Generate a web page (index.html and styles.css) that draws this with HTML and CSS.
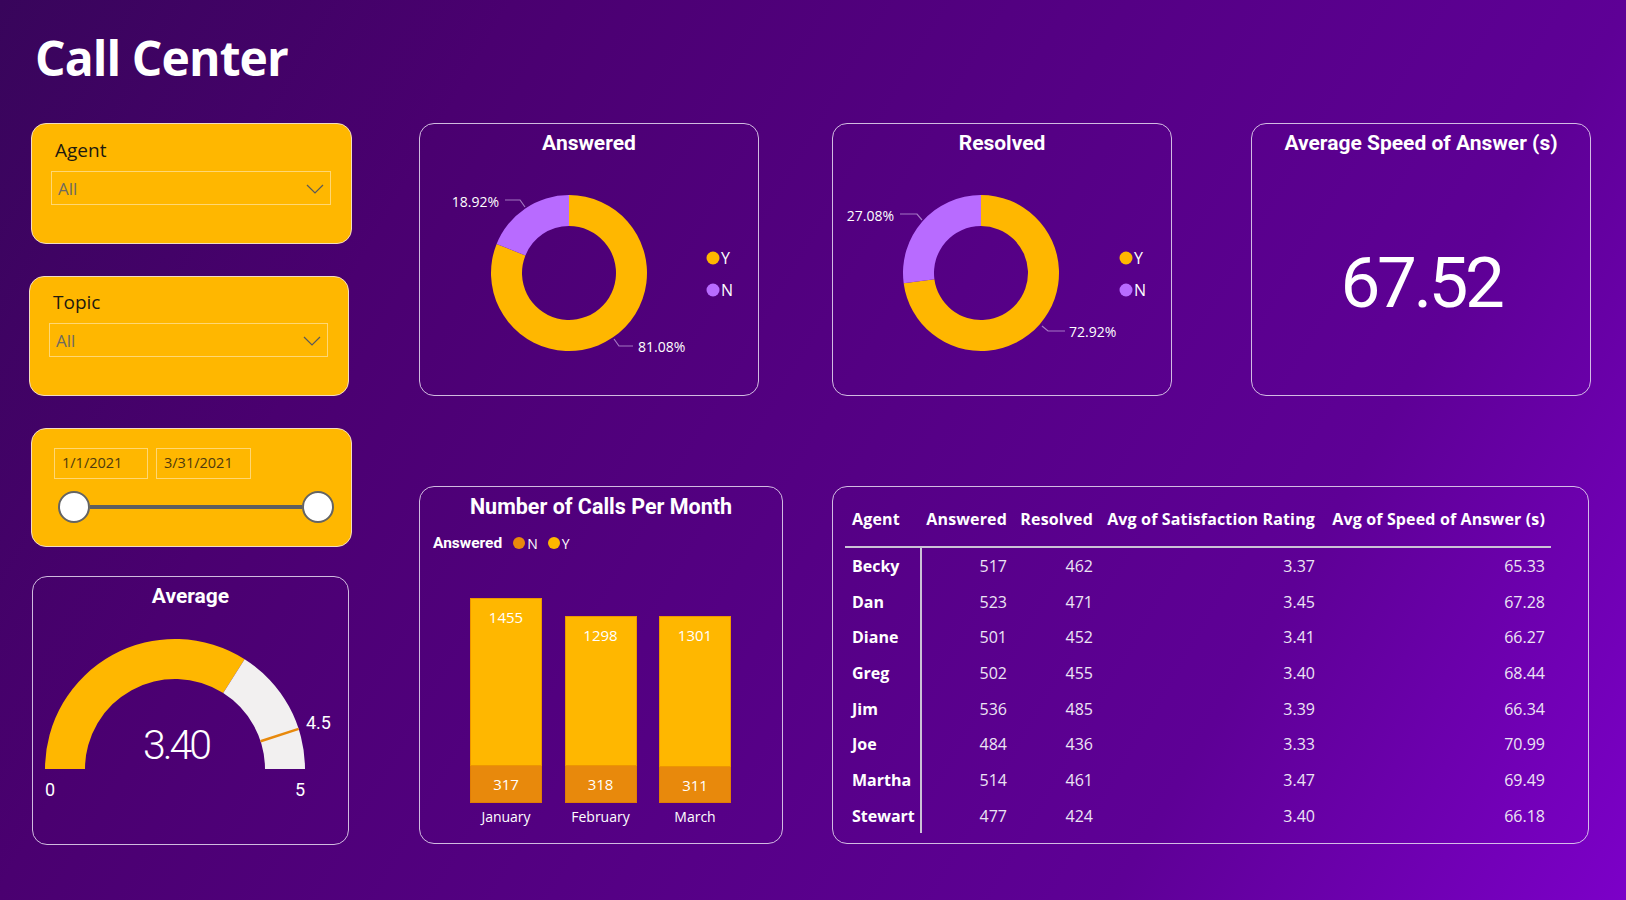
FILE: index.html
```html
<!DOCTYPE html>
<html lang="en">
<head>
    <meta charset="UTF-8">
    <meta name="viewport" content="width=device-width, initial-scale=1.0">
    <title>Call Center</title>
    <link rel="stylesheet" href="styles.css">
</head>
<body>
    <h1 class="page-title">Call Center</h1>

    <div class="board">
        <!-- Filters column -->
        <aside class="filters">
            <div class="slicer slicer-agent">
                <div class="slicer-label">Agent</div>
                <div class="dropdown">
                    <span>All</span>
                    <svg class="chevron" width="18" height="10" viewBox="0 0 18 10"><path d="M1 1 L9 9 L17 1" fill="none" stroke="#5a5a5a" stroke-width="1.2"/></svg>
                </div>
            </div>

            <div class="slicer slicer-topic">
                <div class="slicer-label">Topic</div>
                <div class="dropdown">
                    <span>All</span>
                    <svg class="chevron" width="18" height="10" viewBox="0 0 18 10"><path d="M1 1 L9 9 L17 1" fill="none" stroke="#5a5a5a" stroke-width="1.2"/></svg>
                </div>
            </div>

            <div class="slicer slicer-date">
                <div class="date-inputs">
                    <div class="date-box">1/1/2021</div>
                    <div class="date-box">3/31/2021</div>
                </div>
                <div class="range">
                    <span class="thumb"></span>
                    <span class="track"></span>
                    <span class="thumb"></span>
                </div>
            </div>

            <div class="card gauge-card">
                <div class="card-title">Average</div>
                <svg class="gauge" width="315" height="225" viewBox="0 0 315 225">
                    <path d="M12,150 A130,130 0 0 1 211.65,40.24 L190.22,74.01 A90,90 0 0 0 52,150 Z" fill="#ffb700"/>
                    <path d="M211.65,40.24 A130,130 0 0 1 272,150 L232,150 A90,90 0 0 0 190.22,74.01 Z" fill="#f2f0f0"/>
                    <line x1="227.6" y1="122.19" x2="265.64" y2="109.83" stroke="#e8890c" stroke-width="2.5"/>
                    <text class="gauge-value" x="143" y="140" text-anchor="middle">3.40</text>
                    <text class="gauge-tick" x="273" y="110">4.5</text>
                    <text class="gauge-tick" x="12" y="177">0</text>
                    <text class="gauge-tick" x="262" y="177">5</text>
                </svg>
            </div>
        </aside>

        <!-- Visuals -->
        <main class="visuals">
            <div class="row row-top">
                <div class="card donut-card">
                    <div class="card-title">Answered</div>
                    <svg width="338" height="229" viewBox="0 0 338 229">
                        <path d="M149,29 A78,78 0 1 1 76.62,77.92 L105.39,89.48 A47,47 0 1 0 149,60 Z" fill="#ffb700"/>
                        <path d="M76.62,77.92 A78,78 0 0 1 149,29 L149,60 A47,47 0 0 0 105.39,89.48 Z" fill="#b86bff"/>
                        <polyline class="leader" points="85,34 100,34 105,41"/>
                        <polyline class="leader" points="194,173 199,180 213,180"/>
                        <text class="data-label" x="79" y="41" text-anchor="end">18.92%</text>
                        <text class="data-label" x="218" y="186">81.08%</text>
                        <circle cx="293" cy="92" r="6.5" fill="#ffb700"/>
                        <text class="legend-label" x="301" y="98">Y</text>
                        <circle cx="293" cy="124" r="6.5" fill="#b86bff"/>
                        <text class="legend-label" x="301" y="130">N</text>
                    </svg>
                </div>

                <div class="card donut-card">
                    <div class="card-title">Resolved</div>
                    <svg width="338" height="229" viewBox="0 0 338 229">
                        <path d="M148,29 A78,78 0 1 1 70.67,117.17 L101.40,113.13 A47,47 0 1 0 148,60 Z" fill="#ffb700"/>
                        <path d="M70.67,117.17 A78,78 0 0 1 148,29 L148,60 A47,47 0 0 0 101.40,113.13 Z" fill="#b86bff"/>
                        <polyline class="leader" points="67,48 84,48 89,54"/>
                        <polyline class="leader" points="209,160 215,165 232,165"/>
                        <text class="data-label" x="61" y="55" text-anchor="end">27.08%</text>
                        <text class="data-label" x="236" y="171">72.92%</text>
                        <circle cx="293" cy="92" r="6.5" fill="#ffb700"/>
                        <text class="legend-label" x="301" y="98">Y</text>
                        <circle cx="293" cy="124" r="6.5" fill="#b86bff"/>
                        <text class="legend-label" x="301" y="130">N</text>
                    </svg>
                </div>

                <div class="card kpi-card">
                    <div class="card-title">Average Speed of Answer (s)</div>
                    <div class="kpi-value">67.52</div>
                </div>
            </div>

            <div class="row row-bottom">
                <div class="card calls-card">
                    <div class="card-title calls-title">Number of Calls Per Month</div>
                    <div class="calls-legend">
                        <b>Answered</b>
                        <span class="dot dot-n"></span><span>N</span>
                        <span class="dot dot-y"></span><span>Y</span>
                    </div>
                    <div class="bars">
                        <div class="bar">
                            <div class="seg seg-y" style="height: 168px">1455</div>
                            <div class="seg seg-n" style="height: 37px">317</div>
                        </div>
                        <div class="bar">
                            <div class="seg seg-y" style="height: 150px">1298</div>
                            <div class="seg seg-n" style="height: 37px">318</div>
                        </div>
                        <div class="bar">
                            <div class="seg seg-y" style="height: 151px">1301</div>
                            <div class="seg seg-n" style="height: 36px">311</div>
                        </div>
                    </div>
                    <div class="months">
                        <span>January</span>
                        <span>February</span>
                        <span>March</span>
                    </div>
                </div>

                <div class="card table-card">
                    <table class="agents">
                        <colgroup>
                            <col style="width: 76px">
                            <col style="width: 92px">
                            <col style="width: 86px">
                            <col style="width: 222px">
                            <col style="width: 230px">
                        </colgroup>
                        <thead>
                            <tr>
                                <th class="name">Agent</th>
                                <th>Answered</th>
                                <th>Resolved</th>
                                <th>Avg of Satisfaction Rating</th>
                                <th>Avg of Speed of Answer (s)</th>
                            </tr>
                        </thead>
                        <tbody>
                            <tr><td class="name">Becky</td><td>517</td><td>462</td><td>3.37</td><td>65.33</td></tr>
                            <tr><td class="name">Dan</td><td>523</td><td>471</td><td>3.45</td><td>67.28</td></tr>
                            <tr><td class="name">Diane</td><td>501</td><td>452</td><td>3.41</td><td>66.27</td></tr>
                            <tr><td class="name">Greg</td><td>502</td><td>455</td><td>3.40</td><td>68.44</td></tr>
                            <tr><td class="name">Jim</td><td>536</td><td>485</td><td>3.39</td><td>66.34</td></tr>
                            <tr><td class="name">Joe</td><td>484</td><td>436</td><td>3.33</td><td>70.99</td></tr>
                            <tr><td class="name">Martha</td><td>514</td><td>461</td><td>3.47</td><td>69.49</td></tr>
                            <tr><td class="name">Stewart</td><td>477</td><td>424</td><td>3.40</td><td>66.18</td></tr>
                        </tbody>
                    </table>
                </div>
            </div>
        </main>
    </div>
</body>
</html>
```

FILE: styles.css
```css
* {
    box-sizing: border-box;
}
body {
    margin: 0;
    width: 1626px;
    height: 900px;
    overflow: hidden;
    font-family: "Open Sans", sans-serif;
    color: #fff;
    background: linear-gradient(120deg, #38055b 0%, #4a0070 24%, #5e0096 76%, #7c00c8 100%);
}
.page-title {
    margin: 0;
    height: 123px;
    padding: 34px 0 0 35px;
    font-size: 48px;
    line-height: 48px;
    font-weight: 700;
    letter-spacing: -0.9px;
}
.board {
    display: grid;
    grid-template-columns: 321px 1172px;
    column-gap: 67px;
    padding-left: 31px;
}

/* Filters */
.filters {
    display: flex;
    flex-direction: column;
}
.slicer {
    background-color: #ffb700;
    border: 1px solid #f3dcc0;
    border-radius: 15px;
    width: 321px;
}
.slicer-agent {
    height: 121px;
    padding: 14px 20px 0 19px;
    margin-bottom: 32px;
}
.slicer-topic {
    height: 120px;
    width: 320px;
    margin-left: -2px;
    padding: 13px 20px 0 19px;
    margin-bottom: 32px;
}
.slicer-label {
    font-size: 19px;
    line-height: 24px;
    color: #1e1a10;
    padding-left: 4px;
}
.dropdown {
    margin-top: 9px;
    height: 34px;
    border: 1.5px solid rgba(255, 255, 255, 0.45);
    display: flex;
    align-items: center;
    justify-content: space-between;
    padding: 0 6px 0 6px;
    font-size: 17px;
    color: #6e6a60;
}
.chevron {
    margin-top: 2px;
}
.slicer-date {
    height: 119px;
    padding: 19px 0 0 22px;
    margin-bottom: 29px;
}
.date-inputs {
    display: flex;
    gap: 8px;
}
.date-box {
    height: 31px;
    width: 94px;
    border: 1.5px solid rgba(255, 255, 255, 0.45);
    font-size: 14.5px;
    line-height: 28px;
    padding-left: 7px;
    color: #4e3a0e;
}
.date-box + .date-box {
    width: 95px;
}
.range {
    display: flex;
    align-items: center;
    margin: 12px 0 0 4px;
    width: 276px;
}
.thumb {
    width: 32px;
    height: 32px;
    border-radius: 50%;
    background: #fff;
    border: 2.5px solid #646464;
    flex-shrink: 0;
}
.track {
    flex: 1;
    height: 4px;
    background: #5f5f5f;
}

/* Cards */
.card {
    border: 1px solid rgba(232, 220, 242, 0.85);
    border-radius: 15px;
}
.card-title {
    padding: 7px 0 10px;
    font-family: Roboto, sans-serif;
    font-weight: 700;
    font-size: 21px;
    line-height: 25px;
    text-align: center;
}
.gauge-card {
    width: 317px;
    height: 269px;
    margin-left: 1px;
}
.gauge {
    display: block;
}
.gauge-value {
    font-family: Roboto, sans-serif;
    font-weight: 300;
    font-size: 41px;
    letter-spacing: -3px;
    fill: #fff;
}
.gauge-tick {
    font-family: Roboto, sans-serif;
    font-size: 18px;
    fill: #fff;
}

.visuals {
    display: flex;
    flex-direction: column;
}
.row {
    display: flex;
}
.row-top {
    height: 273px;
    margin-bottom: 90px;
    gap: 73px;
}
.donut-card, .kpi-card {
    width: 340px;
}
.donut-card svg {
    display: block;
}
.kpi-card {
    margin-left: 6px;
}
.leader {
    fill: none;
    stroke: rgba(200, 170, 225, 0.7);
    stroke-width: 1.2;
}
.data-label {
    font-size: 14px;
    fill: #fff;
}
.legend-label {
    font-size: 16px;
    fill: #fff;
}
.kpi-value {
    padding-top: 82px;
    font-family: Roboto, sans-serif;
    font-size: 71px;
    line-height: 70px;
    letter-spacing: -3.5px;
    text-align: center;
}

.row-bottom {
    height: 358px;
    gap: 49px;
}
.calls-card {
    width: 364px;
}
.calls-title {
    font-size: 21.5px;
}
.calls-legend {
    height: 28px;
    padding-left: 13px;
    display: flex;
    align-items: center;
    font-size: 14px;
}
.calls-legend b {
    font-family: Roboto, sans-serif;
    font-size: 15.5px;
    margin-right: 11px;
}
.dot {
    width: 12px;
    height: 12px;
    border-radius: 50%;
    margin-right: 2px;
}
.dot-n {
    background: #e8890c;
}
.dot-y {
    background: #ffb700;
    margin-left: 10px;
}
.bars {
    display: flex;
    align-items: flex-end;
    height: 246px;
    padding-left: 50px;
    gap: 22.5px;
}
.bar {
    width: 72px;
    display: flex;
    flex-direction: column;
}
.seg {
    font-size: 15px;
    text-align: center;
    border: 1px solid rgba(214, 110, 0, 0.45);
}
.seg-y {
    background: #ffb700;
    padding-top: 7px;
    line-height: 22px;
}
.seg-n {
    background: #e8890c;
    border-top: none;
    display: flex;
    align-items: center;
    justify-content: center;
}
.months {
    display: flex;
    padding-left: 50px;
    gap: 22.5px;
    line-height: 28px;
    font-size: 14px;
}
.months span {
    width: 72px;
    text-align: center;
}

.table-card {
    width: 757px;
    padding-left: 12px;
}
.agents {
    border-collapse: collapse;
    table-layout: fixed;
    width: 706px;
    font-size: 16px;
}
.agents th {
    height: 60px;
    padding: 4px 6px 0 0;
    text-align: right;
    font-weight: 700;
    letter-spacing: 0.15px;
    white-space: nowrap;
    border-bottom: 2px solid #cbc2d6;
}
.agents td {
    height: 35.7px;
    padding: 2px 6px 0 0;
    text-align: right;
    color: #ece4f4;
}
.agents .name {
    text-align: left;
    padding-left: 7px;
    font-weight: 700;
    color: #fff;
}
.agents td.name {
    border-right: 2px solid #cbc2d6;
}
```
